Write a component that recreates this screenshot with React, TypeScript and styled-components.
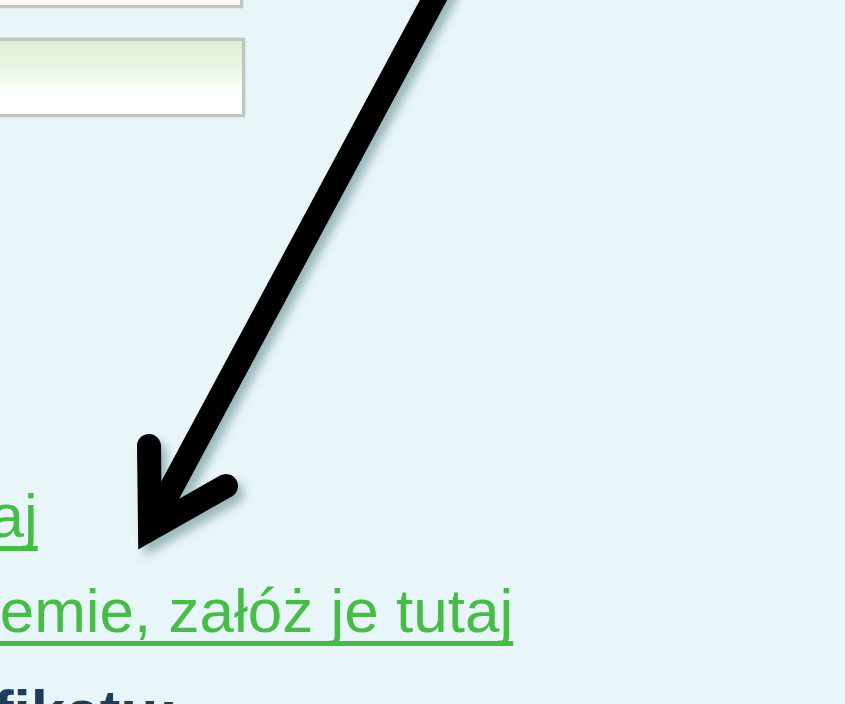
import React from 'react';
import styled, { createGlobalStyle } from 'styled-components';

const GlobalStyle = createGlobalStyle`
  html, body {
    margin: 0;
    padding: 0;
    background: #e8f6fa;
    overflow: hidden;
  }
`;

const Page = styled.div`
  position: relative;
  width: 845px;
  height: 704px;
  overflow: hidden;
  background: #e8f6fa;
  font-family: 'Liberation Sans', Arial, sans-serif;
`;

// the page is shown zoomed in and cropped, so the column begins left of the view
const Column = styled.div`
  display: flex;
  flex-direction: column;
  align-items: flex-start;
  margin-left: -748px;
  margin-top: -71px;
`;

const Form = styled.div`
  display: flex;
  flex-direction: column;
  gap: 30px;
`;

const Field = styled.div<{ $variant: 'plain' | 'active' }>`
  box-sizing: border-box;
  width: ${(p) => (p.$variant === 'active' ? '993px' : '991px')};
  height: 79px;
  border: 3px solid #c3c3c3;
  box-shadow: 0 0 2px rgba(0, 0, 0, 0.18);
  background: ${(p) =>
    p.$variant === 'active'
      ? 'linear-gradient(180deg, #dcefd4 0%, #eef8ea 45%, #ffffff 75%)'
      : '#fdf9f6'};
`;

const Links = styled.div`
  display: flex;
  flex-direction: column;
  margin-top: 351px;
  font-size: 62px;
  line-height: 95px;
  white-space: nowrap;
`;

const Link = styled.a`
  color: #47bd47;
  text-decoration: underline;
  text-decoration-thickness: 5px;
  text-underline-offset: 9px;
  text-decoration-skip-ink: none;
  cursor: pointer;
`;

const Heading = styled.div`
  margin-top: 6px;
  color: #1f3d58;
  font-weight: 700;
`;

const Overlay = styled.svg`
  position: absolute;
  left: 0;
  top: 0;
  pointer-events: none;
`;

const Arrow: React.FC = () => (
  <Overlay width="845" height="704" viewBox="0 0 845 704">
    <defs>
      <filter id="arrowShadow" x="-20%" y="-20%" width="140%" height="140%">
        <feDropShadow dx="6" dy="7" stdDeviation="5" floodColor="#3d6b70" floodOpacity="0.45" />
      </filter>
    </defs>
    <g
      filter="url(#arrowShadow)"
      fill="none"
      stroke="#000"
      strokeWidth="24"
      strokeLinecap="round"
      strokeLinejoin="miter"
    >
      <path d="M440 -12 L152 524" />
      <path d="M149 446 L150 529 L226 486" />
    </g>
  </Overlay>
);

const App: React.FC = () => {
  return (
    <Page>
      <GlobalStyle />
      <Column>
        <Form>
          <Field $variant="plain" />
          <Field $variant="active" />
        </Form>
        <Links>
          <div>
            <Link>Przypomnij hasło i login tutaj</Link>
          </div>
          <div>
            <Link>Jeśli nie masz konta w systemie, załóż je tutaj</Link>
          </div>
          <Heading>Instrukcja instalacji certyfikatu:</Heading>
        </Links>
      </Column>
      <Arrow />
    </Page>
  );
};

export default App;
